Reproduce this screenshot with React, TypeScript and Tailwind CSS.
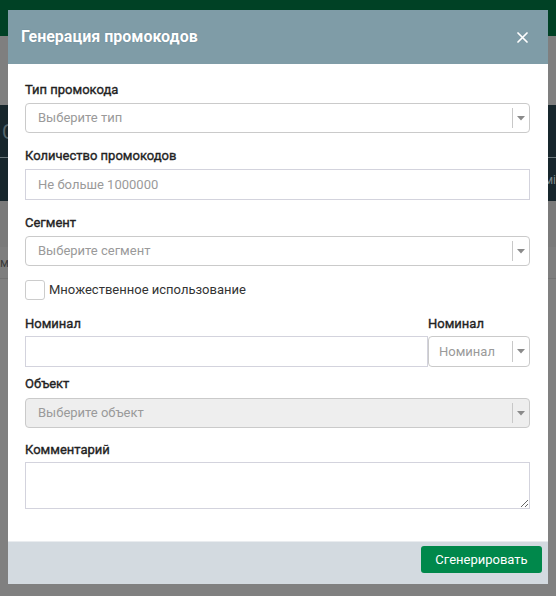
import React from "react";

const font = { fontFamily: "Roboto, 'Noto Sans', Arial, sans-serif" };

function Arrow() {
  return (
    <div className="flex w-[17px] items-center justify-center self-stretch border-l border-[#c8c8c8]">
      <svg width="8" height="5" viewBox="0 0 8 5">
        <path d="M0 0 L8 0 L4 4.5 Z" fill="#8a8a8a" />
      </svg>
    </div>
  );
}

function Select({ placeholder, disabled }: { placeholder: string; disabled?: boolean }) {
  return (
    <div
      className={`flex h-[30px] w-full items-stretch rounded-[4px] border border-[#cacaca] ${
        disabled ? "bg-[#eeeeee]" : "bg-white"
      }`}
    >
      <div className="flex flex-1 items-center pl-[12px] text-[13px] text-[#9a9a9a]">{placeholder}</div>
      <div className="flex py-[4px]">
        <Arrow />
      </div>
    </div>
  );
}

function Label({ children, className = "" }: { children: React.ReactNode; className?: string }) {
  return (
    <div
      className={`h-[16px] text-[13px] font-normal leading-[16px] text-[#222222] [-webkit-text-stroke:0.35px_#222222] ${className}`}
    >
      {children}
    </div>
  );
}

export default function App() {
  return (
    <div className="relative h-[596px] w-[556px] overflow-hidden bg-[#808080]" style={font}>
      {/* background page (dimmed) */}
      <div className="h-[36px] bg-[#004125]" />
      <div className="h-[69px] bg-[#7f7f7f]" />
      <div className="h-[53px] border-b border-[#6a767a] bg-[#17262c] pl-[2px] pt-[12px] text-[20px] text-[#55646a]">C</div>
      <div className="flex h-[43px] items-center justify-end bg-[#17262c] pr-[0px] text-[12px] text-[#7c8a8f]">мі</div>
      <div className="h-[46px] bg-[#7a7a7a]" />
      <div className="flex h-[32px] items-center border-b border-[#737373] bg-[#7e7e7e] text-[12px] text-[#3a3a3a]">мч</div>

      {/* modal */}
      <div className="absolute left-[8px] top-[10px] flex h-[574px] w-[540px] flex-col bg-white">
        <div className="flex h-[54px] items-center justify-between bg-[#7f9ca7] pl-[13px] pr-[20px]">
          <div className="text-[16px] font-bold text-white [text-shadow:0_0_1px_rgba(60,90,110,0.6)]">
            Генерация промокодов
          </div>
          <svg width="11" height="11" viewBox="0 0 11 11">
            <path d="M1 1 L10 10 M10 1 L1 10" stroke="white" strokeWidth="1.7" strokeLinecap="round" />
          </svg>
        </div>

        <div className="flex flex-1 flex-col pl-[17px] pr-[18px] pt-[18px]">
          <Label>Тип промокода</Label>
          <div className="mt-[5px]">
            <Select placeholder="Выберите тип" />
          </div>

          <Label className="mt-[15px]">Количество промокодов</Label>
          <div className="mt-[5px] flex h-[31px] items-center border border-[#d3d3dd] pl-[12px] text-[13px] text-[#9a9a9a]">
            Не больше 1000000
          </div>

          <Label className="mt-[15px]">Сегмент</Label>
          <div className="mt-[5px]">
            <Select placeholder="Выберите сегмент" />
          </div>

          <div className="mt-[14px] flex items-center">
            <div className="h-[20px] w-[20px] rounded-[3px] border border-[#cccccc] bg-white" />
            <span className="ml-[4px] text-[13px] text-[#333333]">Множественное использование</span>
          </div>

          <div className="mt-[16px] flex">
            <div className="flex flex-1 flex-col">
              <Label>Номинал</Label>
              <div className="mt-[4px] h-[31px] border border-[#d3d3dd]" />
            </div>
            <div className="flex w-[102px] flex-col">
              <Label>Номинал</Label>
              <div className="mt-[4px] flex h-[31px] items-stretch rounded-[4px] border border-[#cacaca] bg-white">
                <div className="flex flex-1 items-center pl-[10px] text-[13px] text-[#9a9a9a]">Номинал</div>
                <div className="flex py-[4px]">
                  <Arrow />
                </div>
              </div>
            </div>
          </div>

          <Label className="mt-[9px]">Объект</Label>
          <div className="mt-[6px]">
            <Select placeholder="Выберите объект" disabled />
          </div>

          <Label className="mt-[14px]">Комментарий</Label>
          <textarea className="mt-[4px] h-[47px] w-full resize-y border border-[#d3d3dd] outline-none" />
        </div>

        <div className="flex h-[43px] justify-end border-t border-[#e9ecef] bg-[#d3dae0] pr-[6px] pt-[4px]">
          <div className="flex h-[27px] w-[121px] items-center justify-center rounded-[3px] bg-[#00884b] text-[13px] text-white">
            Сгенерировать
          </div>
        </div>
      </div>
    </div>
  );
}
